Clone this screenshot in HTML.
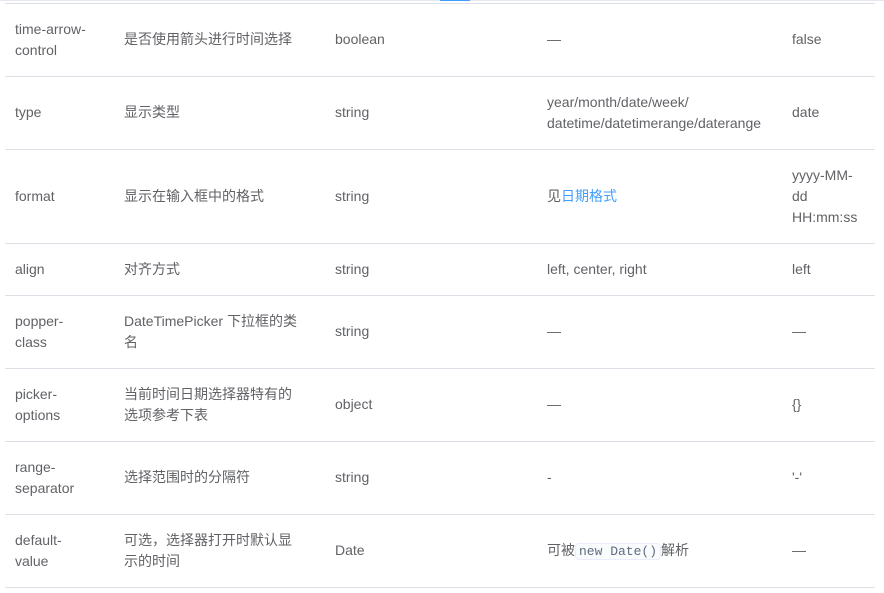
<!DOCTYPE html>
<html><head><meta charset="utf-8"><style>
body{margin:0;width:884px;height:593px;overflow:hidden;background:#fff;font-family:"Liberation Sans","Noto Sans CJK SC",sans-serif;font-size:14px;color:#606266;position:relative}
.top{position:absolute;left:0;top:0;width:884px;height:1px;background:#e4e7ed}
.bar{position:absolute;left:440px;top:0;width:30px;height:1px;background:#409eff}
table{position:absolute;left:5px;top:3px;width:870px;border-collapse:collapse;table-layout:fixed}
td{border-top:1px solid #dcdfe6;border-bottom:1px solid #dcdfe6;padding:0 10px 1px;line-height:21px;vertical-align:middle;white-space:nowrap}
a{color:#409eff;text-decoration:none}
code{font-family:"Liberation Mono",monospace;font-size:13px;background:#fafbfc;border:1px solid #eaeefb;border-radius:4px;padding:0 3px;color:#5e6d82}
</style></head><body>
<div class="top"></div><div class="bar"></div>
<table>
<colgroup><col style="width:109px"><col style="width:211px"><col style="width:212px"><col style="width:245px"><col style="width:93px"></colgroup>
<tr style="height:73px"><td>time-arrow-<br>control</td><td>是否使用箭头进行时间选择</td><td>boolean</td><td>—</td><td>false</td></tr>
<tr style="height:73px"><td>type</td><td>显示类型</td><td>string</td><td>year/month/date/week/<br>datetime/datetimerange/daterange</td><td>date</td></tr>
<tr style="height:94px"><td>format</td><td>显示在输入框中的格式</td><td>string</td><td>见<a>日期格式</a></td><td>yyyy-MM-<br>dd<br>HH:mm:ss</td></tr>
<tr style="height:52px"><td>align</td><td>对齐方式</td><td>string</td><td>left, center, right</td><td>left</td></tr>
<tr style="height:73px"><td>popper-<br>class</td><td>DateTimePicker 下拉框的类<br>名</td><td>string</td><td>—</td><td>—</td></tr>
<tr style="height:73px"><td>picker-<br>options</td><td>当前时间日期选择器特有的<br>选项参考下表</td><td>object</td><td>—</td><td>{}</td></tr>
<tr style="height:73px"><td>range-<br>separator</td><td>选择范围时的分隔符</td><td>string</td><td>-</td><td>'-'</td></tr>
<tr style="height:73px"><td>default-<br>value</td><td>可选，选择器打开时默认显<br>示的时间</td><td>Date</td><td>可被<code>new Date()</code>解析</td><td>—</td></tr>
</table>
</body></html>
